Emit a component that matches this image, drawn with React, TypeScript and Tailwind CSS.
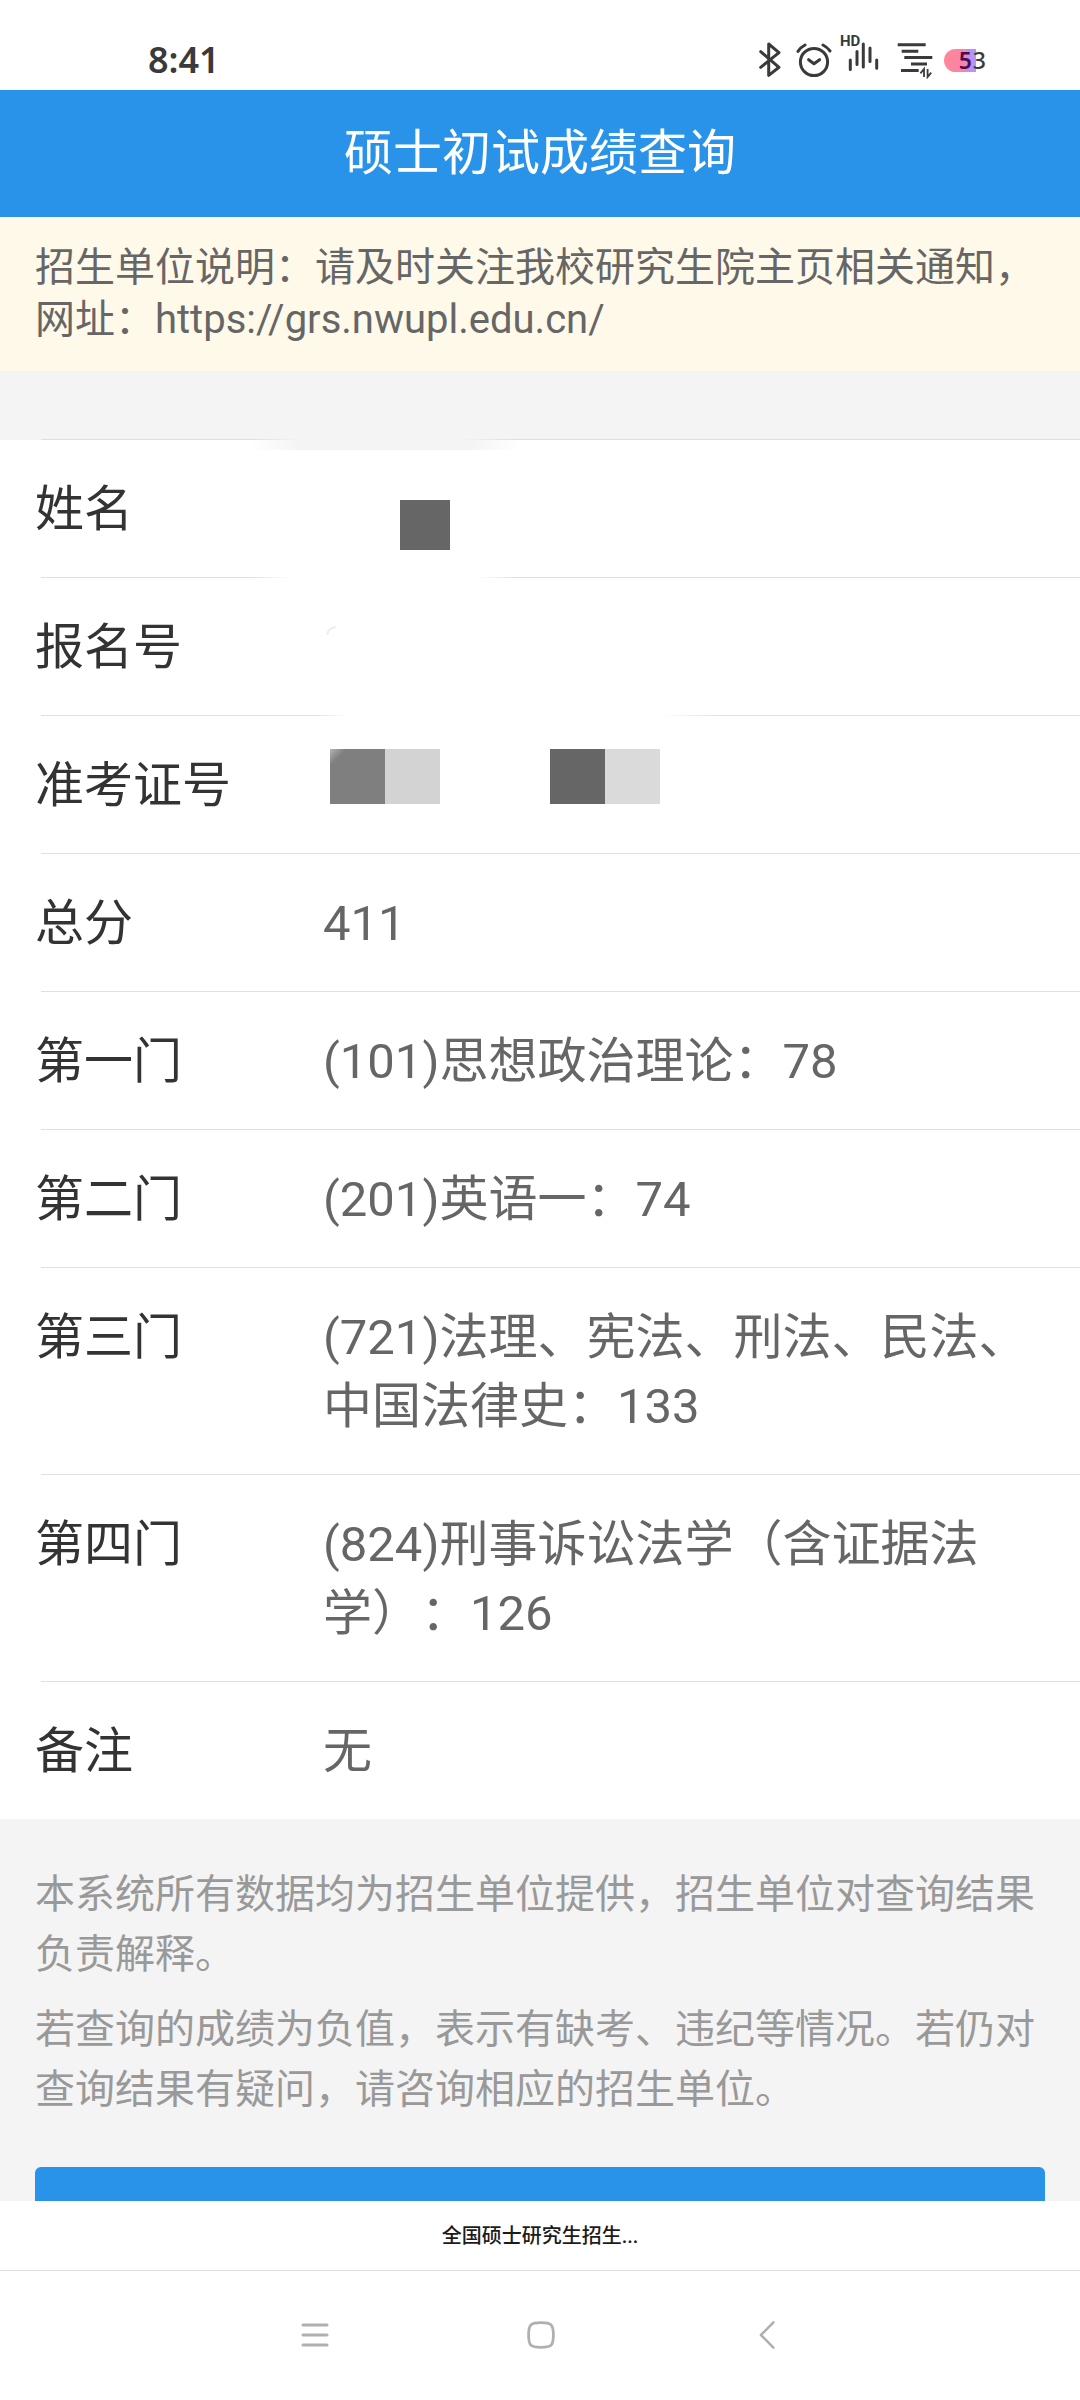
type Row = {
  label: string
  value?: string
  divider?: string
}

const plainDivider = 'bg-[#e0e0e0]'

const rows: Row[] = [
  {
    label: '姓名',
    divider: 'bg-[linear-gradient(to_right,#dedede_210px,#f4f4f4_260px,#f4f4f4_420px,#dedede_475px)]'
  },
  {
    label: '报名号',
    divider: 'bg-[linear-gradient(to_right,#e0e0e0_210px,#ffffff_250px,#ffffff_435px,#e0e0e0_475px)]'
  },
  {
    label: '准考证号',
    divider: 'bg-[linear-gradient(to_right,#e0e0e0_275px,#ffffff_305px,#ffffff_620px,#e0e0e0_680px)]'
  },
  { label: '总分', value: '411' },
  { label: '第一门', value: '(101)思想政治理论：78' },
  { label: '第二门', value: '(201)英语一：74' },
  { label: '第三门', value: '(721)法理、宪法、刑法、民法、中国法律史：133' },
  { label: '第四门', value: '(824)刑事诉讼法学（含证据法学）：126' },
  { label: '备注', value: '无' }
]

const notes = [
  '本系统所有数据均为招生单位提供，招生单位对查询结果负责解释。',
  '若查询的成绩为负值，表示有缺考、违纪等情况。若仍对查询结果有疑问，请咨询相应的招生单位。'
]

function StatusBar() {
  return (
    <div className="flex h-[90px] shrink-0 items-center justify-between bg-white pt-[30px] pr-[94px] pl-[148px] text-[#3a3a3a]">
      <span className="font-['Noto_Sans',sans-serif] text-[36px] leading-none font-semibold">8:41</span>
      <div className="flex items-center gap-2.5">
        <svg width="28" height="36" viewBox="0 0 28 36" fill="none" stroke="currentColor" strokeWidth="3" strokeLinejoin="round" strokeLinecap="round">
          <path d="M2.7 9.7L21 25.3L10.7 33.4V2L21 10.7L2.7 25.3" />
        </svg>
        <svg width="36" height="36" viewBox="0 0 36 36" fill="none" stroke="currentColor" strokeWidth="3" strokeLinecap="round" strokeLinejoin="round">
          <circle cx="18" cy="20" r="13.6" />
          <path d="M12.6 17.7L18 21.8L23.6 17.7" />
          <path d="M2 9.4Q5 5 9 3M27 3Q31 5 34 9" />
        </svg>
        <div className="relative">
          <svg width="45" height="50" viewBox="0 0 45 50" fill="none" stroke="currentColor" strokeWidth="3" strokeLinecap="round">
            <path d="M8.3 25V34.6M15 16.4V29.6M21.3 9V32M28 13V26.6M34.7 25V33.2" />
          </svg>
          <span className="absolute top-0 -left-0.5 font-['Roboto',sans-serif] text-[15px] leading-[13px] font-bold">HD</span>
        </div>
        <svg width="37" height="37" viewBox="0 0 37 37" fill="none" stroke="currentColor" strokeWidth="3">
          <path d="M.7 2.7H28.7M4.7 9.2H21.3M7.3 15.6H35.3M14 22.1H30M4 28.6H21.7" />
          <path d="M27 35V27L23.4 31.4M30.6 27V35L34.2 30.6" strokeWidth="1.8" />
        </svg>
        <div className="relative h-[23px] w-[42px]">
          <div className="h-[23px] w-[32px] rounded-l-full bg-[linear-gradient(to_right,#ff869b_0,#fb83a4_20px,#b496f2_25px)]" />
          <span className="absolute inset-y-0 right-0 flex items-center gap-px font-['Noto_Sans',sans-serif] text-[23px] leading-none">
            <span className="font-semibold text-[#4c0a4f]">5</span>
            <span className="font-medium">3</span>
          </span>
        </div>
      </div>
    </div>
  )
}

function Mosaic({ label }: { label: string }) {
  if (label === '姓名') {
    return <div className="-mb-2 flex pt-[25px] pl-[77px]"><div className="size-[50px] bg-[#666666]" /></div>
  }
  if (label === '报名号') {
    return (
      <svg className="mt-[12px] ml-[2px]" width="14" height="12" viewBox="0 0 14 12" fill="none" stroke="#eeeeee" strokeWidth="2">
        <path d="M2 10Q3 3 11 2" />
      </svg>
    )
  }
  return (
    <div className="-mt-0.5 flex pl-[7px]">
      <div className="size-[55px] bg-[linear-gradient(135deg,#b4b4b4_0,#7f7f7f_12px)]" />
      <div className="size-[55px] bg-[#d3d3d3]" />
      <div className="ml-[110px] size-[55px] bg-[#666666]" />
      <div className="size-[55px] bg-[#dadada]" />
    </div>
  )
}

function ResultList() {
  return (
    <dl className="bg-[linear-gradient(#f4f4f4_1px,#ffffff_1px)] text-[49px] leading-[69px]">
      {rows.map((row, index) => (
        <div key={row.label} className="relative">
          <div className={`ml-[41px] h-px ${row.divider ?? plainDivider}`} />
          {index === 0 && (
            <div className="absolute top-px left-[250px] h-[10px] w-[270px] bg-[linear-gradient(to_right,#ffffff,#f4f4f4_50px,#f4f4f4_220px,#ffffff)]" />
          )}
          <div className="flex px-[35px] pt-[35px] pb-[33px]">
            <dt className="w-[288px] shrink-0 text-[#333333]">{row.label}</dt>
            <dd className="min-w-0 flex-1 text-[#666666]">{row.value ?? <Mosaic label={row.label} />}</dd>
          </div>
        </div>
      ))}
    </dl>
  )
}

function NavBar() {
  return (
    <nav className="flex h-[129px] shrink-0 items-center justify-center gap-[186px] bg-white pb-0.5 pl-0.5 text-[#b0b0b0]">
      <button type="button" className="flex size-10 items-center justify-center">
        <svg width="28" height="28" viewBox="0 0 28 28" fill="none" stroke="currentColor" strokeWidth="3" strokeLinecap="round">
          <path d="M2 4H26M2 14H26M2 24H26" />
        </svg>
      </button>
      <button type="button" className="flex size-10 items-center justify-center">
        <svg width="28" height="28" viewBox="0 0 28 28" fill="none" stroke="currentColor" strokeWidth="2.8">
          <path d="M14 1.6C24 1.6 26.4 3 26.4 14S24 26.4 14 26.4S1.6 25 1.6 14S4 1.6 14 1.6Z" />
        </svg>
      </button>
      <button type="button" className="flex size-10 items-center justify-center">
        <svg width="16" height="28" viewBox="0 0 16 28" fill="none" stroke="currentColor" strokeWidth="2.6" strokeLinecap="round" strokeLinejoin="round">
          <path d="M14.4 1.4L2 14L14.4 26.6" />
        </svg>
      </button>
    </nav>
  )
}

export default function App() {
  return (
    <div lang="zh-CN" className="flex h-screen flex-col overflow-hidden bg-white font-['Roboto','Noto_Sans_CJK_SC',sans-serif] [text-spacing-trim:space-all]">
      <StatusBar />
      <main className="min-h-0 flex-1 overflow-hidden bg-[#f4f4f4]">
        <h1 className="bg-[#2993e9] text-center text-[49px] leading-[127px] text-white">硕士初试成绩查询</h1>
        <p className="bg-[#fff9ea] px-[35px] py-[25px] text-[40px] leading-[52px] text-[#666666]">
          招生单位说明：请及时关注我校研究生院主页相关通知，网址：https://grs.nwupl.edu.cn/
        </p>
        <div className="pt-[68px]">
          <ResultList />
        </div>
        <div className="px-[35px] pt-[46px]">
          <div className="space-y-[15px] text-[40px] leading-[60px] text-[#999999]">
            {notes.map((note) => (
              <p key={note}>{note}</p>
            ))}
          </div>
          <button type="button" className="mt-[47px] block h-[127px] w-full rounded-md bg-[#2993e9]" />
        </div>
      </main>
      <div className="h-[70px] shrink-0 border-b border-[#e0e0e0] bg-white text-center text-[20px] leading-[71px] font-medium text-[#1c1c1c]">
        全国硕士研究生招生...
      </div>
      <NavBar />
    </div>
  )
}
